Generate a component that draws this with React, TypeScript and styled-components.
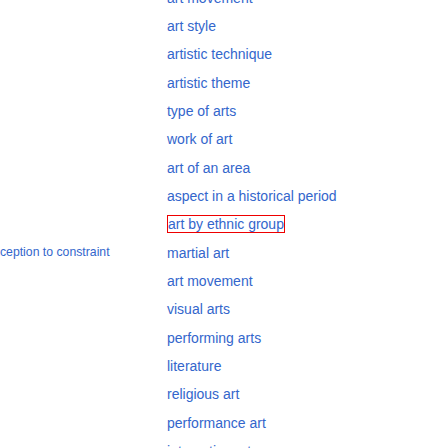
import React from "react";
import styled, { createGlobalStyle } from "styled-components";

const Global = createGlobalStyle`
  html, body { margin: 0; padding: 0; background: #ffffff; }
  body { width: 448px; height: 448px; overflow: hidden; font-family: "Liberation Sans", Arial, sans-serif; }
`;

const Page = styled.div`
  display: grid;
  grid-template-columns: 109.6px 57.4px 1fr;
  width: 448px;
  height: 448px;
  overflow: hidden;
`;

const ROW = 397 / 14;

const LeftCol = styled.div`
  display: flex;
  flex-direction: column;
  margin-top: ${-16.36 + ROW * 9}px;
`;

const LeftRow = styled.div`
  display: flex;
  justify-content: flex-end;
  height: ${ROW}px;
  line-height: ${ROW - 2}px;
  white-space: nowrap;
  font-size: 12.25px;
  color: #3366cc;
`;

const List = styled.ul`
  list-style: none;
  margin: -16.36px 0 0 0;
  padding: 0;
  display: flex;
  flex-direction: column;
  grid-column: 3;
`;

const Item = styled.li`
  height: ${ROW}px;
  line-height: ${ROW}px;
  font-size: 14px;
  white-space: nowrap;
`;

const Link = styled.a<{ $selected?: boolean }>`
  color: #3366cc;
  text-decoration: none;
  border: ${(p) => (p.$selected ? "1px solid #ee0000" : "none")};
  margin-left: 0;
`;

const items = [
  "art movement",
  "art style",
  "artistic technique",
  "artistic theme",
  "type of arts",
  "work of art",
  "art of an area",
  "aspect in a historical period",
  "art by ethnic group",
  "martial art",
  "art movement",
  "visual arts",
  "performing arts",
  "literature",
  "religious art",
  "performance art",
  "interactive art",
];

export default function App() {
  return (
    <>
      <Global />
      <Page>
        <LeftCol>
          <LeftRow>exception to constraint</LeftRow>
        </LeftCol>
        <List>
          {items.map((t, i) => (
            <Item key={i}>
              <Link $selected={t === "art by ethnic group"}>{t}</Link>
            </Item>
          ))}
        </List>
      </Page>
    </>
  );
}
